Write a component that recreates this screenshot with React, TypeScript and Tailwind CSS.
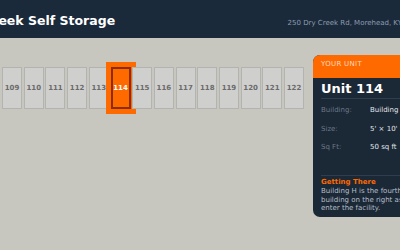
const units = [101, 102, 103, 104, 105, 106, 107, 108, 109, 110, 111, 112, 113, 114, 115, 116, 117, 118, 119, 120, 121, 122]

const details = [
  { label: 'Building:', value: 'Building H' },
  { label: 'Size:', value: "5' × 10'" },
  { label: 'Sq Ft:', value: '50 sq ft' },
]

export default function App() {
  const selected = 114

  return (
    <div className="h-[250px] w-[400px] overflow-hidden bg-[#c8c7bf] font-['DejaVu_Sans',sans-serif]">
      {/* Header */}
      <header className="ml-[-60px] flex h-[38px] w-[480px] items-baseline justify-between bg-[#1b2a3b] pl-[14px] pr-[18px] pt-[15px]">
        <h1 className="text-[12.5px] font-bold leading-none text-white">Dry Creek Self Storage</h1>
        <span className="text-[7px] leading-none text-[#8d9cb0]">250 Dry Creek Rd, Morehead, KY</span>
      </header>

      {/* Map + unit card */}
      <main className="flex w-[463px] items-start gap-[9px] pt-[17px]">
        <div className="mt-[7px] flex min-w-0 flex-1 justify-end overflow-hidden py-[5px]">
          <div className="flex shrink-0 gap-[1.7px]">
            {units.map((n) =>
              n === selected ? (
                <div
                  key={n}
                  className="flex h-[42px] w-[20px] shrink-0 items-center justify-center border-2 border-[#8a2e00] bg-[#ff6a00] text-[7px] font-bold text-white shadow-[0_0_0_5px_#ff6a00]"
                >
                  {n}
                </div>
              ) : (
                <div
                  key={n}
                  className="flex h-[42px] w-[20px] shrink-0 items-center justify-center border border-[#b3b3b0] bg-[#cfcfcd] text-[7px] font-bold text-[#6b6b6b]"
                >
                  {n}
                </div>
              )
            )}
          </div>
        </div>

        <div className="w-[150px] shrink-0 overflow-hidden rounded-[7px] bg-[#1b2836]">
          <div className="h-[23px] bg-[#ff6a00] px-[8px] pt-[5px] text-[7px] leading-[8px] tracking-[0.3px] text-[#ffd8bd]">
            YOUR UNIT
          </div>
          <div className="px-[8px] pb-[4px]">
            <div className="border-b border-[#2f3e4e] pb-[2px] pt-[4px] text-[13px] font-bold leading-[14px] text-white">
              Unit {selected}
            </div>
            <div className="flex flex-col gap-[8.5px] border-b border-[#2f3e4e] pb-[23px] pt-[6px]">
              {details.map((d) => (
                <div key={d.label} className="flex text-[7px] leading-[10px]">
                  <span className="w-[49px] text-[#6b7888]">{d.label}</span>
                  <span className="font-medium text-[#e3e7ec]">{d.value}</span>
                </div>
              ))}
            </div>
            <div className="pt-[2px] text-[7px] font-bold leading-[9px] text-[#ff6a00]">Getting There</div>
            <p className="w-[104px] text-[7px] leading-[8.5px] text-[#b6bfca]">
              Building H is the fourth building on the right as you enter the facility.
            </p>
          </div>
        </div>
      </main>
    </div>
  )
}
